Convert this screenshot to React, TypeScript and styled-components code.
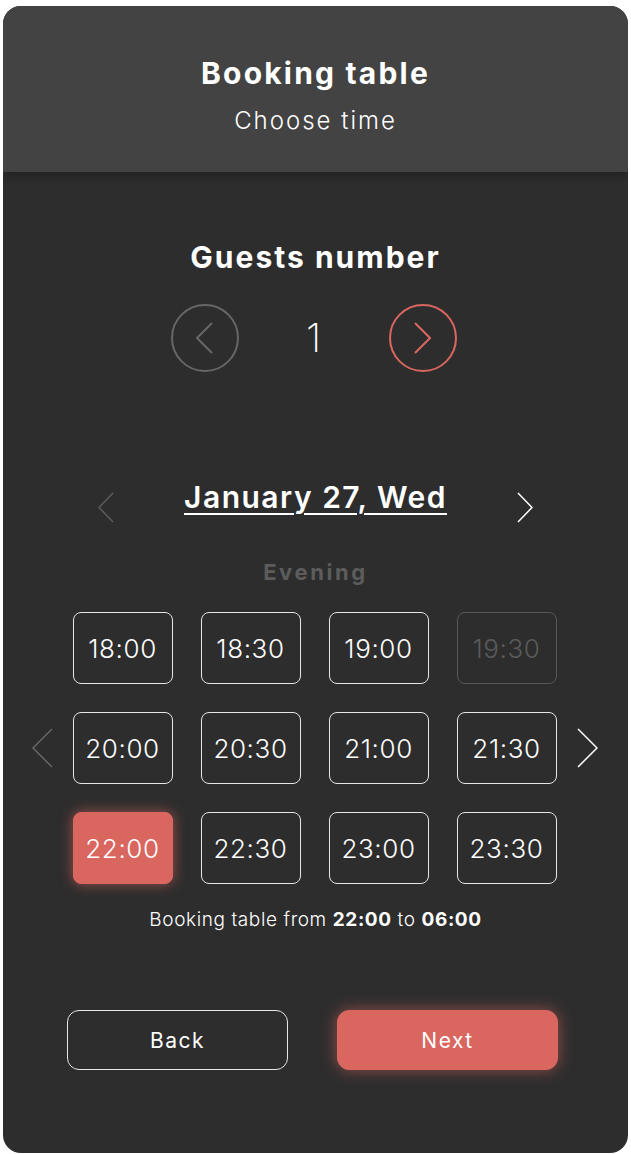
import { useState } from 'react'
import styled, { createGlobalStyle } from 'styled-components'

const Global = createGlobalStyle`
  body {
    margin: 0;
    background: #ffffff;
    font-family: Inter, "Noto Sans", sans-serif;
  }
`

const coral = '#d9665f'

const Card = styled.div`
    width: 625px;
    height: 1147px;
    margin: 6px 3px;
    border-radius: 18px;
    overflow: hidden;
    background: #2d2d2d;
    display: flex;
    flex-direction: column;
    `

const Header = styled.div`
    height: 166px;
    box-sizing: border-box;
    padding-top: 49px;
    background: #434343;
    box-shadow: 0 4px 8px rgba(0, 0, 0, 0.25);
    display: flex;
    flex-direction: column;
    align-items: center;
    color: #ffffff;
    position: relative;
    z-index: 1;
    `

const Title = styled.div`
    font-size: 30px;
    line-height: 36px;
    font-weight: 700;
    letter-spacing: 2.2px;
    `

const Subtitle = styled.div`
    font-size: 24px;
    line-height: 30px;
    font-weight: 300;
    letter-spacing: 2px;
    margin-top: 15px;
    `

const Body = styled.div`
    display: flex;
    flex-direction: column;
    align-items: center;
    padding-top: 67px;
    color: #ffffff;
    `

const Section = styled.div`
    font-size: 30px;
    line-height: 36px;
    font-weight: 700;
    letter-spacing: 2px;
    `

const Counter = styled.div`
    display: flex;
    align-items: center;
    margin-top: 29px;
    margin-right: 4px;
    `

const Circle = styled.button<{ $active?: boolean }>`
    width: 68px;
    height: 68px;
    border-radius: 50%;
    border: 2px solid ${p => (p.$active ? coral : '#666666')};
    background: transparent;
    color: ${p => (p.$active ? coral : '#666666')};
    display: flex;
    align-items: center;
    justify-content: center;
    padding: 0;
    cursor: pointer;
    `

const Count = styled.div`
    width: 150px;
    text-align: center;
    font-size: 40px;
    line-height: 48px;
    font-weight: 200;
    `

const DateRow = styled.div`
    display: flex;
    align-items: center;
    margin-top: 98px;
    width: 436px;
    justify-content: space-between;
    `

const Arrow = styled.span<{ $color: string; $drop?: number }>`
    display: flex;
    color: ${p => p.$color};
    margin-top: ${p => p.$drop || 0}px;
    cursor: pointer;
    `

const DateText = styled.div`
    font-size: 30px;
    line-height: 40px;
    font-weight: 600;
    letter-spacing: 1.5px;
    text-decoration: underline;
    text-decoration-thickness: 2px;
    text-underline-offset: 5px;
    `

const Period = styled.div`
    margin-top: 35px;
    font-size: 22px;
    line-height: 28px;
    font-weight: 700;
    letter-spacing: 2.6px;
    color: #5c5c5c;
    `

const SlotsRow = styled.div`
    display: flex;
    align-items: center;
    gap: 20px;
    margin-top: 26px;
    margin-right: 2px;
    `

const Grid = styled.div`
    display: grid;
    grid-template-columns: repeat(4, 100px);
    grid-auto-rows: 72px;
    gap: 28px;
    `

const Slot = styled.button<{ $state: 'free' | 'busy' | 'picked' }>`
    box-sizing: border-box;
    border-radius: 8px;
    font-family: inherit;
    font-size: 26px;
    font-weight: 300;
    letter-spacing: 0.6px;
    padding: 0;
    cursor: ${p => (p.$state === 'busy' ? 'default' : 'pointer')};
    border: 1px solid ${p =>
        p.$state === 'busy' ? '#585858' : p.$state === 'picked' ? coral : '#e6e6e6'};
    color: ${p => (p.$state === 'busy' ? '#5a5a5a' : '#ffffff')};
    background: ${p => (p.$state === 'picked' ? coral : 'transparent')};
    box-shadow: ${p => (p.$state === 'picked' ? `0 0 14px rgba(217, 102, 95, 0.65)` : 'none')};
    `

const Info = styled.div`
    margin-top: 24px;
    font-size: 19px;
    line-height: 24px;
    font-weight: 300;
    letter-spacing: 0.6px;
    b {
        font-weight: 700;
    }
    `

const Actions = styled.div`
    display: flex;
    gap: 49px;
    margin-top: 78px;
    margin-right: 6px;
    `

const ActionBtn = styled.button<{ $primary?: boolean }>`
    width: 221px;
    height: 60px;
    box-sizing: border-box;
    border-radius: 12px;
    font-family: inherit;
    font-size: 21px;
    font-weight: 400;
    letter-spacing: 1.5px;
    color: #ffffff;
    cursor: pointer;
    border: 1px solid ${p => (p.$primary ? coral : '#e6e6e6')};
    background: ${p => (p.$primary ? coral : 'transparent')};
    box-shadow: ${p => (p.$primary ? '0 0 16px rgba(217, 102, 95, 0.6)' : 'none')};
    `

const Chevron = ({ dir, w, h, sw = 1.5 }: { dir: 'l' | 'r'; w: number; h: number; sw?: number }) => (
    <svg width={w} height={h} viewBox={`0 0 ${w} ${h}`} fill="none">
        <polyline
            points={dir === 'l' ? `${w - 1},1 1,${h / 2} ${w - 1},${h - 1}` : `1,1 ${w - 1},${h / 2} 1,${h - 1}`}
            stroke="currentColor"
            strokeWidth={sw}
        />
    </svg>
)

const times = ['18:00', '18:30', '19:00', '19:30', '20:00', '20:30', '21:00', '21:30', '22:00', '22:30', '23:00', '23:30']
const busy = ['19:30']

export default function App() {
    const [guests, setGuests] = useState(1)
    const [picked, setPicked] = useState('22:00')

    return (
        <>
            <Global />
            <Card>
                <Header>
                    <Title>Booking table</Title>
                    <Subtitle>Choose time</Subtitle>
                </Header>
                <Body>
                    <Section>Guests number</Section>
                    <Counter>
                        <Circle onClick={() => setGuests(Math.max(1, guests - 1))}>
                            <Chevron dir="l" w={17} h={32} sw={2} />
                        </Circle>
                        <Count>{guests}</Count>
                        <Circle $active onClick={() => setGuests(guests + 1)}>
                            <Chevron dir="r" w={17} h={32} sw={2} />
                        </Circle>
                    </Counter>

                    <DateRow>
                        <Arrow $color="#5c5c5c" $drop={22}>
                            <Chevron dir="l" w={16} h={31} />
                        </Arrow>
                        <DateText>January 27, Wed</DateText>
                        <Arrow $color="#ffffff" $drop={22}>
                            <Chevron dir="r" w={16} h={31} />
                        </Arrow>
                    </DateRow>

                    <Period>Evening</Period>

                    <SlotsRow>
                        <Arrow $color="#666666">
                            <Chevron dir="l" w={21} h={40} />
                        </Arrow>
                        <Grid>
                            {times.map(t => (
                                <Slot
                                    key={t}
                                    $state={busy.includes(t) ? 'busy' : t === picked ? 'picked' : 'free'}
                                    onClick={() => !busy.includes(t) && setPicked(t)}
                                >
                                    {t}
                                </Slot>
                            ))}
                        </Grid>
                        <Arrow $color="#ffffff">
                            <Chevron dir="r" w={21} h={40} />
                        </Arrow>
                    </SlotsRow>

                    <Info>
                        Booking table from <b>{picked}</b> to <b>06:00</b>
                    </Info>

                    <Actions>
                        <ActionBtn>Back</ActionBtn>
                        <ActionBtn $primary>Next</ActionBtn>
                    </Actions>
                </Body>
            </Card>
        </>
    )
}
